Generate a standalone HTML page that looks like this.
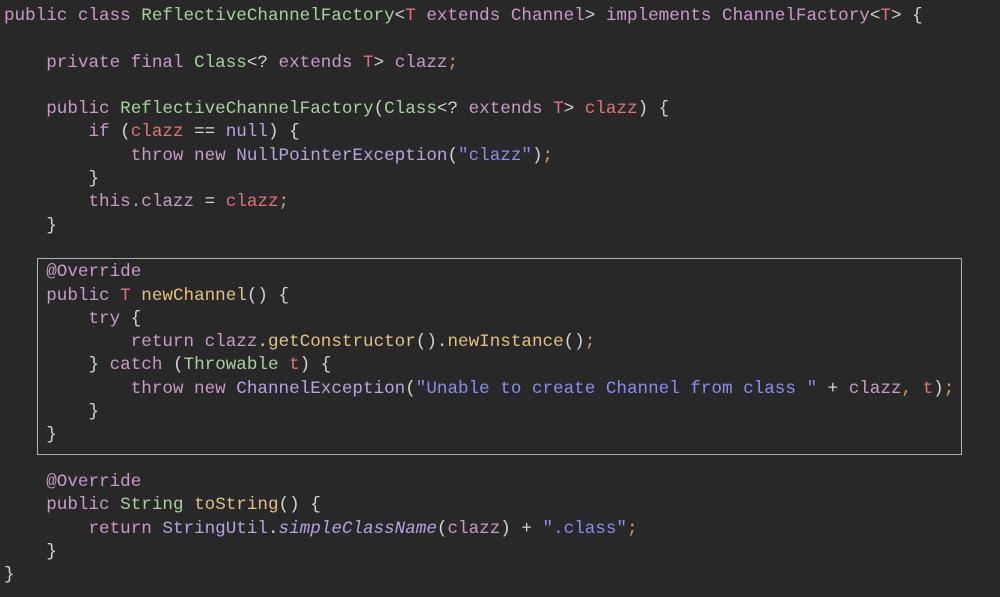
<!DOCTYPE html>
<html><head><style>
html,body{margin:0;padding:0;background:#282828;width:1000px;height:597px;overflow:hidden}
pre{margin:0;position:absolute;left:4px;top:5px;font-family:"Liberation Mono",monospace;font-size:17.6px;line-height:23.3px;color:#d4d4d4;letter-spacing:0}
.k{color:#c99ac8}.t{color:#a3d29b}.v{color:#e0727a}.s{color:#8c8cf0}.m{color:#e3c07d}.p{color:#d99a5f}.c{color:#b7a3e0}.a{color:#c99ac8}.i{color:#b7a3e0;font-style:italic}
.box{position:absolute;left:37px;top:258px;width:923px;height:195px;border:1.5px solid #b0b0b0}
</style></head><body>
<div class="box"></div>
<pre><span class="k">public class</span> <span class="t">ReflectiveChannelFactory</span>&lt;<span class="v">T</span> <span class="k">extends</span> <span class="k">Channel</span>&gt; <span class="k">implements</span> <span class="k">ChannelFactory</span>&lt;<span class="v">T</span>&gt; {

    <span class="k">private final</span> <span class="t">Class</span>&lt;? <span class="k">extends</span> <span class="v">T</span>&gt; <span class="k">clazz</span><span class="p">;</span>

    <span class="k">public</span> <span class="t">ReflectiveChannelFactory</span>(<span class="t">Class</span>&lt;? <span class="k">extends</span> <span class="v">T</span>&gt; <span class="v">clazz</span>) {
        <span class="k">if</span> (<span class="v">clazz</span> == <span class="c">null</span>) {
            <span class="k">throw new</span> <span class="c">NullPointerException</span>(<span class="s">"clazz"</span>)<span class="p">;</span>
        }
        <span class="k">this.clazz</span> = <span class="v">clazz</span><span class="p">;</span>
    }

    <span class="a">@Override</span>
    <span class="k">public</span> <span class="v">T</span> <span class="m">newChannel</span>() {
        <span class="k">try</span> {
            <span class="k">return</span> <span class="k">clazz</span>.<span class="m">getConstructor</span>().<span class="m">newInstance</span>()<span class="p">;</span>
        } <span class="k">catch</span> (<span class="t">Throwable</span> <span class="v">t</span>) {
            <span class="k">throw new</span> <span class="c">ChannelException</span>(<span class="s">"Unable to create Channel from class "</span> + <span class="k">clazz</span><span class="p">,</span> <span class="v">t</span>)<span class="p">;</span>
        }
    }

    <span class="a">@Override</span>
    <span class="k">public</span> <span class="t">String</span> <span class="m">toString</span>() {
        <span class="k">return</span> <span class="c">StringUtil</span>.<span class="i">simpleClassName</span>(<span class="k">clazz</span>) + <span class="s">".class"</span><span class="p">;</span>
    }
}</pre>
</body></html>
